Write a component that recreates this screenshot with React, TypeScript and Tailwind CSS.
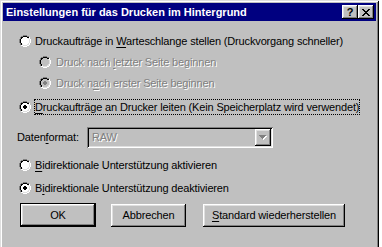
import React from "react";

const RADIO_MAP = [
  "....GGGG....",
  "..GGKKKKGG..",
  ".GKKffffKKW.",
  ".GKffffffLW.",
  "GKffffffffLW",
  "GKffffffffLW",
  "GKffffffffLW",
  "GKffffffffLW",
  ".GKffffffLW.",
  ".GKLffffLLW.",
  "..WWLLLLWW..",
  "....WWWW....",
];
const DOT = [
  [5, 4], [6, 4],
  [4, 5], [5, 5], [6, 5], [7, 5],
  [4, 6], [5, 6], [6, 6], [7, 6],
  [5, 7], [6, 7],
];

function Radio({ checked = false, disabled = false }: { checked?: boolean; disabled?: boolean }) {
  const colors: Record<string, string> = {
    G: "#808080",
    K: "#000000",
    W: "#ffffff",
    L: "#dfdfdf",
    f: disabled ? "#c0c0c0" : "#ffffff",
  };
  const rects: React.ReactNode[] = [];
  RADIO_MAP.forEach((row, y) =>
    row.split("").forEach((c, x) => {
      if (colors[c]) rects.push(<rect key={`${x}-${y}`} x={x} y={y} width={1} height={1} fill={colors[c]} />);
    })
  );
  if (checked)
    DOT.forEach(([x, y]) =>
      rects.push(<rect key={`d${x}-${y}`} x={x} y={y} width={1} height={1} fill={disabled ? "#808080" : "#000000"} />)
    );
  return (
    <svg width={12} height={12} viewBox="0 0 12 12" shapeRendering="crispEdges" className="shrink-0 block">
      {rects}
    </svg>
  );
}

function U({ children }: { children: React.ReactNode }) {
  return <span className="underline underline-offset-[2px] decoration-1">{children}</span>;
}

const bevel =
  "shadow-[inset_-1px_-1px_0_#000,inset_1px_1px_0_#fff,inset_-2px_-2px_0_#808080,inset_2px_2px_0_#dfdfdf]";

export default function App() {
  return (
    <div className="w-[382px] h-[247px] bg-white overflow-hidden font-['Liberation_Sans',Arial,sans-serif] text-[11px] leading-[13px] text-black">
      <div className="w-[379px] h-[262px] bg-[#c0c0c0] p-[3px] shadow-[inset_1px_1px_0_#dfdfdf,inset_-1px_-1px_0_#000,inset_2px_2px_0_#fff,inset_-2px_-2px_0_#808080] flex flex-col">
        {/* Title bar */}
        <div className="h-[18px] bg-[#000080] flex items-center pl-[3px] pr-[2px]">
          <span className="flex-1 text-white font-bold text-[11px] leading-[13px] whitespace-nowrap">
            Einstellungen für das Drucken im Hintergrund
          </span>
          <div className={`w-[16px] h-[14px] bg-[#c0c0c0] ${bevel} flex items-center justify-center`}>
            <span className="font-bold text-[11px] leading-[11px] text-black">?</span>
          </div>
          <div className={`w-[16px] h-[14px] bg-[#c0c0c0] ${bevel} flex items-center justify-center`}>
            <svg width={8} height={7} viewBox="0 0 8 7" shapeRendering="crispEdges">
              <path d="M0 0h2v1h1v1h2V1h1V0h2v1H7v1H6v1H5v1h1v1h1v1h1v1H6V6H5V5H3v1H2v1H0V6h1V5h1V4h1V3H2V2H1V1H0z" fill="#000" />
            </svg>
          </div>
        </div>

        {/* Content */}
        <div className="flex flex-col pl-[14px] tracking-[-0.15px]">
          <div className="mt-[12px] h-[16px] flex items-center pl-[2px]">
            <Radio />
            <span className="ml-[3px] border border-transparent whitespace-nowrap">
              Druckaufträge in <U>W</U>arteschlange stellen (Druckvorgang schneller)
            </span>
          </div>

          <div className="mt-[5px] h-[16px] flex items-center pl-[22px] text-[#808080] [text-shadow:1px_1px_0_#fff]">
            <Radio disabled />
            <span className="ml-[4px] border border-transparent whitespace-nowrap">
              Druck nach <U>l</U>etzter Seite beginnen
            </span>
          </div>

          <div className="mt-[5px] h-[16px] flex items-center pl-[22px] text-[#808080] [text-shadow:1px_1px_0_#fff]">
            <Radio disabled checked />
            <span className="ml-[4px] border border-transparent whitespace-nowrap">
              Druck n<U>a</U>ch erster Seite beginnen
            </span>
          </div>

          <div className="mt-[8px] h-[16px] flex items-center pl-[2px]">
            <Radio checked />
            <span className="ml-[3px] h-[16px] flex items-center border border-dotted border-black whitespace-nowrap">
              <span>
                <U>D</U>ruckaufträge an Drucker leiten (Kein Speicherplatz wird verwendet)
              </span>
            </span>
          </div>

          <div className="mt-[12px] h-[21px] flex items-center">
            <span className="w-[70px] whitespace-nowrap">
              Daten<U>f</U>ormat:
            </span>
            <div className="w-[186px] h-[21px] bg-[#c0c0c0] p-[2px] shadow-[inset_1px_1px_0_#808080,inset_-1px_-1px_0_#fff,inset_2px_2px_0_#000,inset_-2px_-2px_0_#dfdfdf] flex">
              <div className="flex-1 flex items-center pl-[3px] text-[#808080] [text-shadow:1px_1px_0_#fff]">RAW</div>
              <div className={`w-[16px] h-[17px] bg-[#c0c0c0] ${bevel} flex items-center justify-center`}>
                <svg width={8} height={5} viewBox="0 0 8 5" shapeRendering="crispEdges">
                  <path d="M1 1h7v1H7v1H6v1H5v1H4V4H3V3H2V2H1z" fill="#fff" />
                  <path d="M0 0h7v1H6v1H5v1H4v1H3V3H2V2H1V1H0z" fill="#808080" />
                </svg>
              </div>
            </div>
          </div>

          <div className="mt-[9px] h-[16px] flex items-center pl-[2px]">
            <Radio />
            <span className="ml-[3px] border border-transparent whitespace-nowrap">
              <U>B</U>idirektionale Unterstützung aktivieren
            </span>
          </div>

          <div className="mt-[7px] h-[16px] flex items-center pl-[2px]">
            <Radio checked />
            <span className="ml-[3px] border border-transparent whitespace-nowrap">
              B<U>i</U>direktionale Unterstützung deaktivieren
            </span>
          </div>

          <div className="mt-[7px] flex items-start pl-[3px]">
            <div className="w-[76px] h-[24px] border border-black">
              <div className={`w-full h-full ${bevel} flex items-center justify-center`}>OK</div>
            </div>
            <div className={`ml-[15px] w-[75px] h-[23px] mt-[1px] ${bevel} flex items-center justify-center`}>
              Abbrechen
            </div>
            <div className={`ml-[17px] w-[142px] h-[23px] mt-[1px] ${bevel} flex items-center justify-center whitespace-nowrap`}>
              <span>
                <U>S</U>tandard wiederherstellen
              </span>
            </div>
          </div>
        </div>
      </div>
    </div>
  );
}
